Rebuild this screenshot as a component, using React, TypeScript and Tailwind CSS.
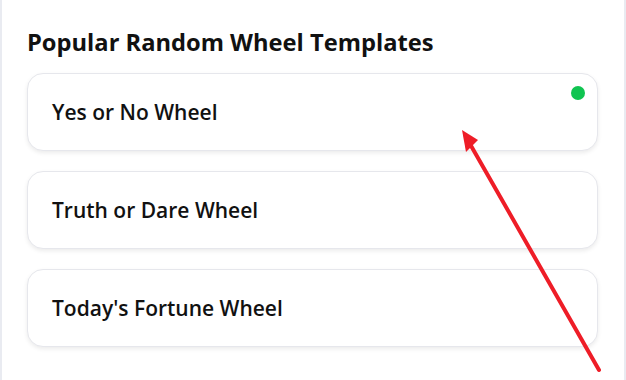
const templates = [
  { name: 'Yes or No Wheel', active: true },
  { name: 'Truth or Dare Wheel', active: false },
  { name: "Today's Fortune Wheel", active: false },
]

export default function App() {
  return (
    <div
      className="relative w-[626px] h-[380px] overflow-hidden bg-white border-l-2 border-r-2 border-[#e9ebf1]"
      style={{ fontFamily: '"Open Sans", "Noto Sans", sans-serif' }}
    >
      <div className="pl-[25px] pr-[26px] pt-[26px]">
        <h2 className="text-[23.7px] leading-[32px] font-bold text-[#111]">Popular Random Wheel Templates</h2>
        <div className="mt-[15px] flex flex-col gap-5">
          {templates.map((t) => (
            <div
              key={t.name}
              className="relative h-[78px] flex items-center px-6 rounded-2xl bg-white border border-[#e6e7ec] shadow-[0_2px_4px_rgba(0,0,0,0.08)]"
            >
              <span className="text-[21px] leading-[28px] font-semibold text-[#111]">{t.name}</span>
              {t.active && (
                <span className="absolute top-3 right-3 w-3.5 h-3.5 rounded-full bg-[#10c451]" />
              )}
            </div>
          ))}
        </div>
      </div>

      {/* annotation arrow */}
      <svg className="absolute inset-0 pointer-events-none" width="626" height="380" viewBox="0 0 626 380">
        <line x1="597" y1="370" x2="468" y2="144" stroke="#ee1d27" strokeWidth="4" strokeLinecap="round" />
        <polygon points="460,130 476,140 464,152" fill="#ee1d27" />
      </svg>
    </div>
  )
}
